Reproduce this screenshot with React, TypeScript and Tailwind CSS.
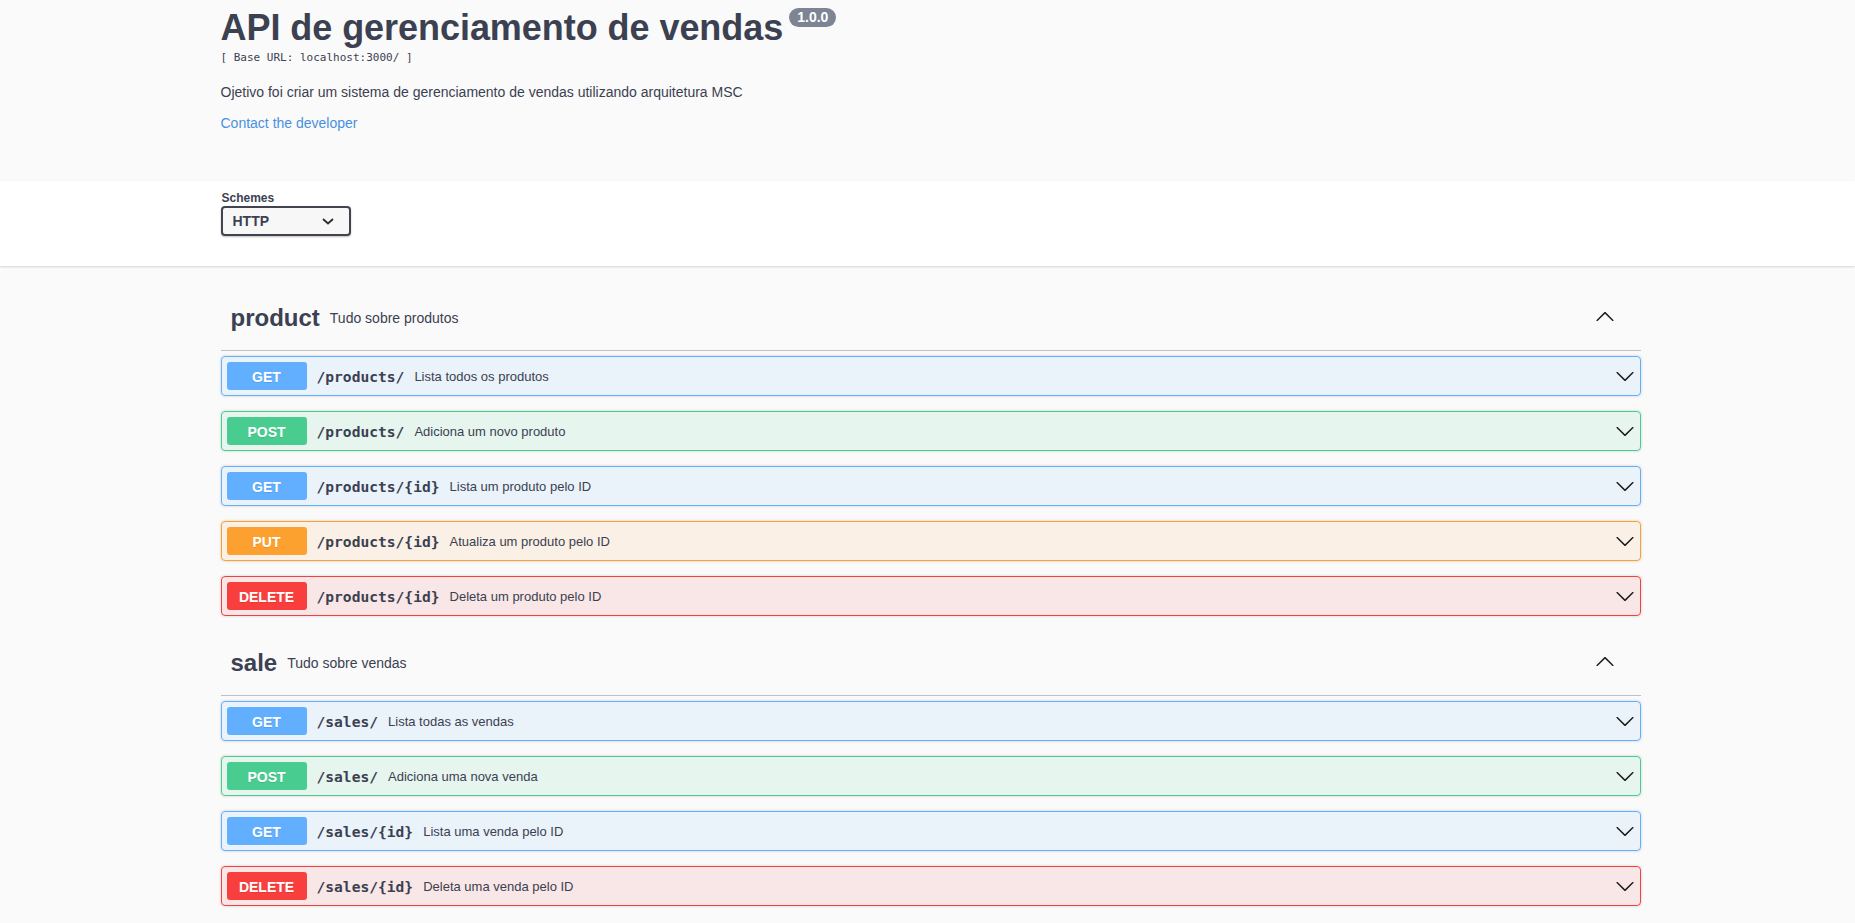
import React from "react";

type Method = "GET" | "POST" | "PUT" | "DELETE";

const methodStyles: Record<Method, { card: string; badge: string }> = {
  GET: {
    card: "border-[#61affe] bg-[rgba(97,175,254,0.1)]",
    badge: "bg-[#61affe]",
  },
  POST: {
    card: "border-[#49cc90] bg-[rgba(73,204,144,0.1)]",
    badge: "bg-[#49cc90]",
  },
  PUT: {
    card: "border-[#fca130] bg-[rgba(252,161,48,0.1)]",
    badge: "bg-[#fca130]",
  },
  DELETE: {
    card: "border-[#f93e3e] bg-[rgba(249,62,62,0.1)]",
    badge: "bg-[#f93e3e]",
  },
};

const sections: {
  name: string;
  desc: string;
  ops: { method: Method; path: string; desc: string }[];
}[] = [
  {
    name: "product",
    desc: "Tudo sobre produtos",
    ops: [
      { method: "GET", path: "/products/", desc: "Lista todos os produtos" },
      { method: "POST", path: "/products/", desc: "Adiciona um novo produto" },
      { method: "GET", path: "/products/{id}", desc: "Lista um produto pelo ID" },
      { method: "PUT", path: "/products/{id}", desc: "Atualiza um produto pelo ID" },
      { method: "DELETE", path: "/products/{id}", desc: "Deleta um produto pelo ID" },
    ],
  },
  {
    name: "sale",
    desc: "Tudo sobre vendas",
    ops: [
      { method: "GET", path: "/sales/", desc: "Lista todas as vendas" },
      { method: "POST", path: "/sales/", desc: "Adiciona uma nova venda" },
      { method: "GET", path: "/sales/{id}", desc: "Lista uma venda pelo ID" },
      { method: "DELETE", path: "/sales/{id}", desc: "Deleta uma venda pelo ID" },
    ],
  },
];

function ArrowUp() {
  return (
    <svg width="20" height="20" viewBox="0 0 20 20" className="fill-[#1b1b1b]">
      <path d="M 17.418 14.908 C 17.69 15.176 18.127 15.176 18.397 14.908 C 18.667 14.64 18.668 14.207 18.397 13.939 L 10.489 6.109 C 10.219 5.841 9.782 5.841 9.51 6.109 L 1.602 13.939 C 1.332 14.207 1.332 14.64 1.602 14.908 C 1.873 15.176 2.311 15.176 2.581 14.908 L 10 7.767 L 17.418 14.908 Z" />
    </svg>
  );
}

function ArrowDown() {
  return (
    <svg width="20" height="20" viewBox="0 0 20 20" className="fill-[#1b1b1b]">
      <path d="M17.418 6.109c.272-.268.709-.268.979 0s.271.701 0 .969l-7.908 7.83c-.27.268-.707.268-.979 0l-7.908-7.83c-.27-.268-.27-.701 0-.969.271-.268.709-.268.979 0L10 13.25l7.418-7.141z" />
    </svg>
  );
}

const wrap = "mx-auto max-w-[1460px] pl-[23px] pr-[17px]";

export default function App() {
  return (
    <div className="min-h-screen bg-[#fafafa] text-[#3b4151] font-['Liberation_Sans',Arial,sans-serif]">
      {/* Info */}
      <div className={`${wrap} pt-[7px] pb-[50px]`}>
        <div className="flex items-start">
          <h2 className="text-[36px] font-bold leading-[41px] tracking-[-0.05px] text-[#3b4151]">
            API de gerenciamento de vendas
          </h2>
          <span className="ml-[6px] mt-[1px] h-[19px] px-[8px] rounded-full bg-[#7d8492] text-white text-[14px] font-bold leading-[19px]">
            1.0.0
          </span>
        </div>
        <div className="mt-[3px] text-[11px] leading-[13px] font-['DejaVu_Sans_Mono',monospace] text-[#3b4151]">
          [ Base URL: localhost:3000/ ]
        </div>
        <p className="mt-[20px] text-[14px] leading-[16px]">
          Ojetivo foi criar um sistema de gerenciamento de vendas utilizando arquitetura MSC
        </p>
        <p className="mt-[15px] text-[14px] leading-[16px]">
          <a className="text-[#4990e2] cursor-pointer">Contact the developer</a>
        </p>
      </div>

      {/* Schemes */}
      <div className="bg-white shadow-[0_1px_2px_0_rgba(0,0,0,0.15)] pt-[10px] pb-[30px]">
        <div className={wrap}>
          <div className="flex flex-col items-start">
            <span className="text-[12px] font-bold leading-[14px] pl-[1px]">Schemes</span>
            <div className="mt-[1px] flex items-center justify-between w-[130px] h-[30px] rounded-[4px] border-2 border-[#41444e] bg-[#f7f7f7] shadow-[0_1px_2px_0_rgba(0,0,0,0.25)] pl-[10px] pr-[15px]">
              <span className="text-[14px] font-bold leading-[16px] text-[#3b4151]">HTTP</span>
              <svg width="12" height="7" viewBox="0 0 12 7" fill="none">
                <path d="M1 1 L6 5.5 L11 1" stroke="#2b2f36" strokeWidth="1.9" />
              </svg>
            </div>
          </div>
        </div>
      </div>

      {/* Sections */}
      <div className={`${wrap} pt-[20px] pb-[40px]`}>
        {sections.map((s) => (
          <div key={s.name}>
            <div className="flex items-center h-[65px] border-b border-[rgba(59,65,81,0.3)] pl-[10px] pr-[26px]">
              <h3 className="text-[24px] font-bold leading-[28px]">{s.name}</h3>
              <small className="flex-1 pl-[10px] text-[14px] leading-[16px]">{s.desc}</small>
              <span className="-mt-[4px]">
                <ArrowUp />
              </span>
            </div>
            <div className="pt-[5px]">
              {s.ops.map((op, i) => (
                <div
                  key={i}
                  className={`flex items-center h-[40px] mb-[15px] rounded-[4px] border p-[5px] shadow-[0_0_3px_rgba(0,0,0,0.19)] ${methodStyles[op.method].card}`}
                >
                  <span
                    className={`w-[80px] h-[28px] rounded-[3px] text-white text-[14px] font-bold leading-[30px] text-center [text-shadow:0_1px_0_rgba(0,0,0,0.1)] ${methodStyles[op.method].badge}`}
                  >
                    {op.method}
                  </span>
                  <span className="mt-[2px] px-[10px] text-[14.6px] font-bold font-['DejaVu_Sans_Mono',monospace] text-[#3b4151] leading-[20px]">
                    {op.path}
                  </span>
                  <span className="mt-[2px] flex-1 text-[13px] leading-[16px] text-[#3b4151]">{op.desc}</span>
                  <ArrowDown />
                </div>
              ))}
            </div>
          </div>
        ))}
      </div>
    </div>
  );
}
